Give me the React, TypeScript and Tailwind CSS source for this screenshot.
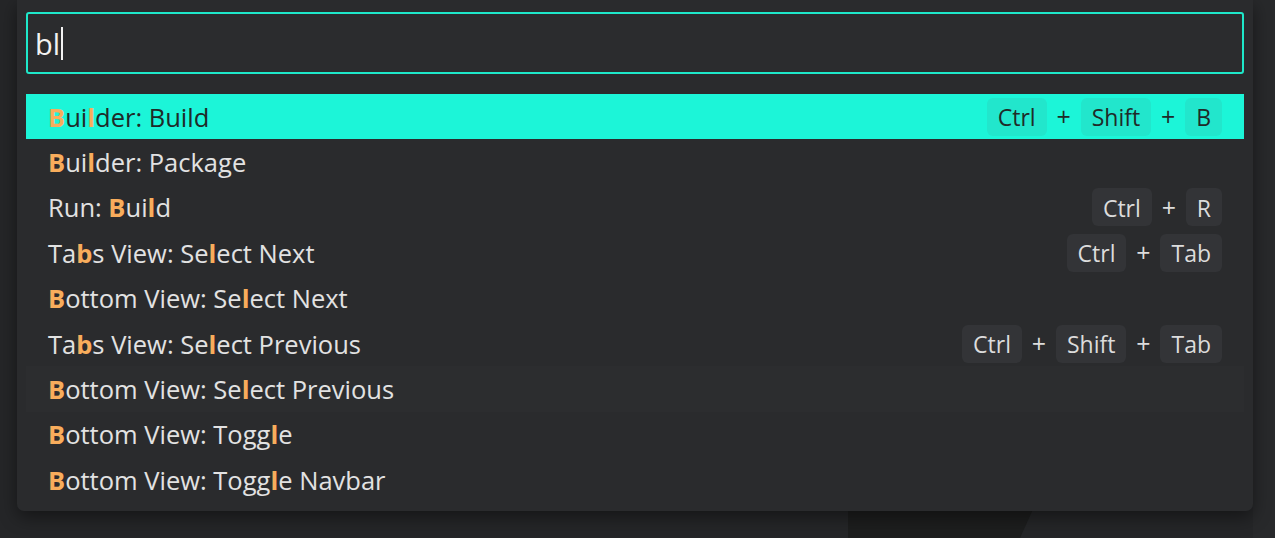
import React from "react";

type Item = { label: string; matches: number[]; keys?: string[] };

const items: Item[] = [
  { label: "Builder: Build", matches: [0, 3], keys: ["Ctrl", "Shift", "B"] },
  { label: "Builder: Package", matches: [0, 3] },
  { label: "Run: Build", matches: [5, 8], keys: ["Ctrl", "R"] },
  { label: "Tabs View: Select Next", matches: [2, 13], keys: ["Ctrl", "Tab"] },
  { label: "Bottom View: Select Next", matches: [0, 15] },
  { label: "Tabs View: Select Previous", matches: [2, 13], keys: ["Ctrl", "Shift", "Tab"] },
  { label: "Bottom View: Select Previous", matches: [0, 15] },
  { label: "Bottom View: Toggle", matches: [0, 17] },
  { label: "Bottom View: Toggle Navbar", matches: [0, 17] },
];

function Label({ text, matches }: { text: string; matches: number[] }) {
  return (
    <span className="whitespace-pre">
      {text.split("").map((ch, i) =>
        matches.includes(i) ? (
          <span key={i} className="font-bold text-[#f8ad5c]">
            {ch}
          </span>
        ) : (
          <span key={i}>{ch}</span>
        )
      )}
    </span>
  );
}

function Keys({ keys, active }: { keys: string[]; active: boolean }) {
  return (
    <div className="flex items-center">
      {keys.map((k, i) => (
        <React.Fragment key={i}>
          {i > 0 && (
            <span
              className={`w-[34px] text-center text-[25px] ${
                active ? "text-[#1f2a28]" : "text-[#dcdcdc]"
              }`}
            >
              +
            </span>
          )}
          <span
            className={`flex h-[38px] items-center rounded-[6px] px-[11px] pt-[1px] text-[23px] ${
              active ? "bg-[#22e6cc] text-[#1f2a28]" : "bg-[#333437] text-[#dcdcdc]"
            }`}
          >
            {k}
          </span>
        </React.Fragment>
      ))}
    </div>
  );
}

export default function App() {
  return (
    <div
      className="relative h-[538px] w-[1275px] overflow-hidden bg-[#252628]"
      style={{ fontFamily: '"Open Sans", "Noto Sans", sans-serif' }}
    >
      <svg className="absolute left-0 top-0" width="1275" height="538">
        <polygon points="848,505 1035,505 1020,538 848,538" fill="#1d1e1e" />
        <rect x="1253" y="0" width="22" height="538" fill="#28292b" />
      </svg>
      <div className="relative ml-[17px] w-[1236px] rounded-b-[7px] bg-[#2a2b2d] px-[9px] pb-[8px] pt-[12px] shadow-[0_6px_18px_rgba(0,0,0,0.45)]">
        <div className="flex h-[62px] items-center rounded-[3px] border-2 border-[#1ee8ca] bg-[#2b2c2e] pl-[7px]">
          <span className="text-[29px] leading-none text-[#f2f2f2]">bl</span>
          <span className="ml-[1px] h-[33px] w-[2px] bg-[#f2f2f2]" />
        </div>
        <div className="mt-[20px] flex flex-col">
          {items.map((it, idx) => {
            const active = idx === 0;
            const hover = idx === 6;
            return (
              <div
                key={idx}
                className={`flex h-[45.4px] items-center justify-between pl-[22px] pr-[22px] text-[25.5px] ${
                  active
                    ? "bg-[#1cf5d8] text-[#1f2a28]"
                    : hover
                    ? "bg-[#2c2d2f] text-[#e2e2e2]"
                    : "text-[#e2e2e2]"
                }`}
              >
                <Label text={it.label} matches={it.matches} />
                {it.keys && <Keys keys={it.keys} active={active} />}
              </div>
            );
          })}
        </div>
      </div>
    </div>
  );
}
